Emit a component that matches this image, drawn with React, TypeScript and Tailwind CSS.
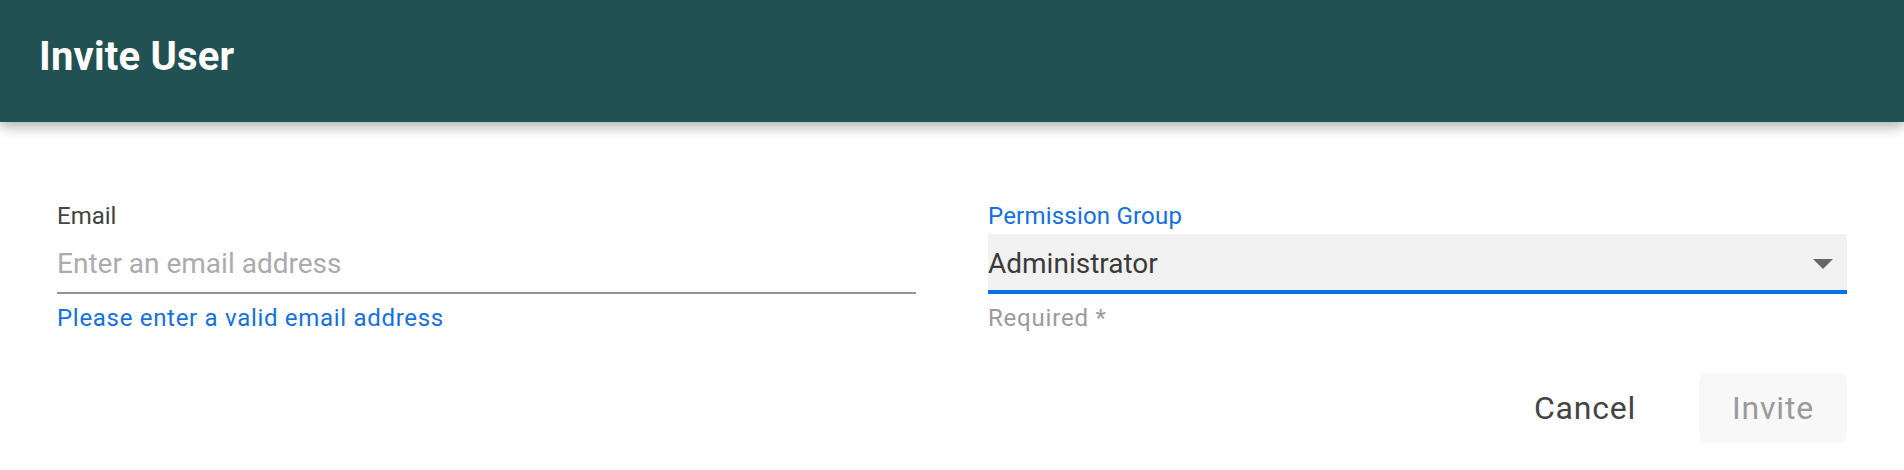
import React from "react";

export default function App() {
  return (
    <div className="min-h-[470px] w-full bg-white" style={{ fontFamily: "Roboto, 'Liberation Sans', sans-serif" }}>
      <div className="h-[122px] bg-[#225153] px-[39px] pt-[37px] shadow-[0_5px_12px_rgba(0,0,0,0.3)] relative">
        <h1 className="text-[40px] leading-[40px] font-bold tracking-[0.2px] text-white">Invite User</h1>
      </div>
      <div className="px-[57px] pt-[82px]">
        <div className="grid grid-cols-2 gap-x-[72px]">
          <div className="flex flex-col">
            <label className="text-[24px] leading-[24px] text-[#444444]">Email</label>
            <div className="mt-[6px] h-[60px] border-b-2 border-[#949494] pt-[16px]">
              <div className="text-[28px] leading-[28px] text-[#ababab]">Enter an email address</div>
            </div>
            <div className="mt-[12px] text-[24px] leading-[24px] tracking-[0.7px] text-[#1370e0]">
              Please enter a valid email address
            </div>
          </div>
          <div className="flex flex-col">
            <label className="text-[24px] leading-[24px] tracking-[0.2px] text-[#1370e0]">Permission Group</label>
            <div className="mt-[6px] h-[60px] bg-[#f1f1f1] border-b-4 border-[#0a6fe8] pt-[16px] pr-[14px] flex items-start justify-between">
              <div className="text-[28px] leading-[28px] text-[#3a3a3a]">Administrator</div>
              <svg width="20" height="11" viewBox="0 0 20 11" className="mt-[9px]">
                <polygon points="0,0 20,0 10,10" fill="#666666" />
              </svg>
            </div>
            <div className="mt-[12px] text-[24px] leading-[24px] tracking-[0.8px] text-[#9a9a9a]">Required *</div>
            <div className="mt-[43px] flex justify-end gap-[30px]">
              <button className="h-[70px] px-[33px] rounded-[8px] text-[32px] leading-[32px] font-normal tracking-[0.8px] text-[#444444]">
                Cancel
              </button>
              <button className="h-[70px] px-[33px] rounded-[8px] bg-[#f8f8f8] text-[32px] leading-[32px] font-normal tracking-[0.8px] text-[#9a9a9a]">
                Invite
              </button>
            </div>
          </div>
        </div>
      </div>
    </div>
  );
}
